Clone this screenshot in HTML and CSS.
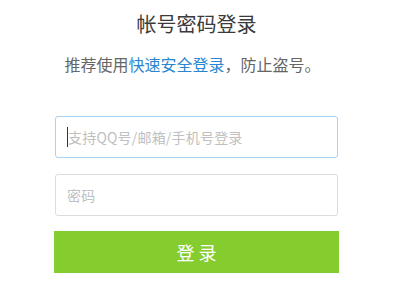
FILE: index.html
```html
<!DOCTYPE html>
<html>
<head>
<meta charset="utf-8">
<link rel="stylesheet" href="styles.css">
</head>
<body>
<div class="login">
  <h1 class="title">帐号密码登录</h1>
  <p class="tip">推荐使用<a class="link" href="#">快速安全登录</a>，防止盗号。</p>
  <div class="field field-active"><span class="caret"></span><span class="ph">支持QQ号/邮箱/手机号登录</span></div>
  <div class="field"><span class="ph">密码</span></div>
  <button class="btn">登 录</button>
</div>
</body>
</html>
```
FILE: styles.css
```css
html, body {
  margin: 0;
  padding: 0;
  background: #fff;
}
body {
  font-family: "Noto Sans CJK SC", "Noto Sans", sans-serif;
  width: 400px;
  height: 300px;
  overflow: hidden;
}
.login {
  width: 285px;
  margin-left: 54px;
  display: flex;
  flex-direction: column;
}
.title {
  margin: 9px 0 0;
  font-size: 20px;
  line-height: 30px;
  font-weight: normal;
  color: #3a3a3a;
  text-align: center;
}
.tip {
  margin: 13px 0 0;
  font-size: 16px;
  line-height: 24px;
  color: #666;
  text-align: center;
  padding-right: 8px;
}
.link {
  color: #2b86d0;
  text-decoration: none;
}
.field {
  box-sizing: border-box;
  width: 283px;
  margin-left: 1px;
  height: 42px;
  border: 1px solid #dcdcdc;
  border-radius: 3px;
  display: flex;
  align-items: center;
  padding-left: 11px;
  margin-top: 16px;
}
.field-active {
  margin-top: 40px;
  border-color: #a9d3f5;
}
.caret {
  width: 1px;
  height: 20px;
  background: #333;
}
.ph {
  font-size: 14px;
  color: #c0c0c0;
  letter-spacing: 0.2px;
}
.btn {
  margin-top: 15px;
  height: 42px;
  width: 285px;
  border: none;
  background: #85cd2f;
  color: #fff;
  font-family: "Noto Sans CJK SC", "Noto Sans", sans-serif;
  font-size: 18px;
  padding: 0;
}
```
